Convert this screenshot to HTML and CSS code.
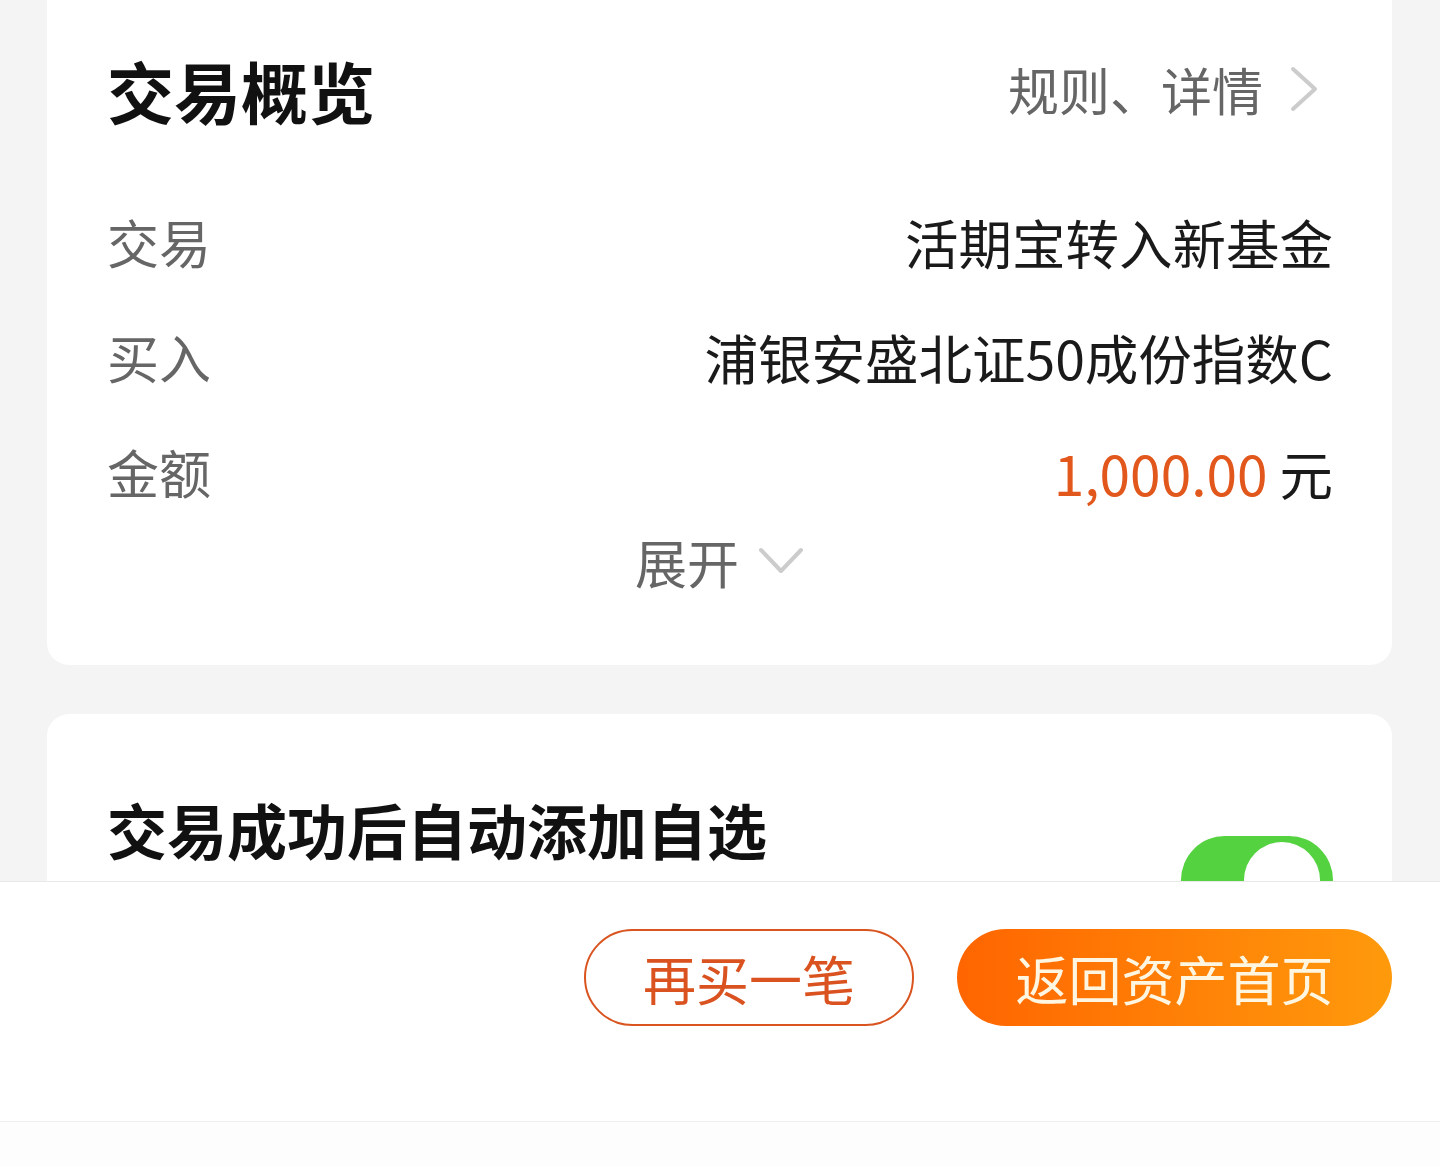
FILE: index.html
```html
<!DOCTYPE html>
<html>
<head>
  <meta charset="utf-8">
  <title>交易概览</title>
  <link rel="stylesheet" href="styles.css">
</head>
<body>
  <div class="content">
    <div class="card overview">
      <div class="card-head">
        <h1>交易概览</h1>
        <a class="more">规则、详情
          <svg width="40" height="48" viewBox="0 0 40 48"><path d="M8 4 L30 24 L8 44" fill="none" stroke="#cccccc" stroke-width="4" stroke-linecap="round" stroke-linejoin="round"/></svg>
        </a>
      </div>
      <div class="row"><span class="label">交易</span><span class="value">活期宝转入新基金</span></div>
      <div class="row"><span class="label">买入</span><span class="value">浦银安盛北证50成份指数C</span></div>
      <div class="row"><span class="label">金额</span><span class="value"><span class="amount">1,000.00</span> 元</span></div>
      <div class="expand">展开
        <svg width="48" height="34" viewBox="0 0 48 34"><path d="M4 6 L24 27 L44 6" fill="none" stroke="#cccccc" stroke-width="4" stroke-linecap="round" stroke-linejoin="round"/></svg>
      </div>
    </div>

    <div class="card auto">
      <h2>交易成功后自动添加自选</h2>
      <div class="switch"><span class="knob"></span></div>
    </div>
  </div>

  <div class="footer">
    <button class="btn btn-line">再买一笔</button>
    <button class="btn btn-fill">返回资产首页</button>
  </div>
  <div class="bottom"></div>
</body>
</html>
```

FILE: styles.css
```css
body {
  margin: 0;
  background: #f4f4f4;
  font-family: "Noto Sans CJK SC", "Noto Sans", sans-serif;
  color: #222;
}
.content {
  height: 881px;
  overflow: hidden;
  padding: 0 48px 0 47px;
}
.card {
  background: #fff;
  border-radius: 22px;
}
.overview {
  border-radius: 0 0 22px 22px;
  padding: 0 59px 72px 60px;
}
.card-head {
  height: 184px;
  display: flex;
  align-items: center;
  justify-content: space-between;
}
.card-head h1 {
  margin: 0;
  font-size: 67px;
  font-weight: bold;
  color: #111;
  position: relative;
  top: -3px;
}
.more {
  display: flex;
  align-items: center;
  gap: 22px;
  font-size: 51px;
  color: #666;
  margin-right: 8px;
  position: relative;
  top: -3px;
}
.row {
  height: 115px;
  display: flex;
  align-items: center;
  justify-content: space-between;
  font-size: 53.5px;
}
.label {
  color: #666;
  font-size: 52px;
}
.value {
  color: #1a1a1a;
}
.amount {
  color: #e2571c;
  font-size: 55px;
}
.expand {
  height: 64px;
  display: flex;
  align-items: center;
  justify-content: center;
  gap: 18px;
  font-size: 52px;
  color: #666;
}
.auto {
  margin-top: 49px;
  height: 400px;
  padding: 0 59px 0 60px;
  display: flex;
  justify-content: space-between;
  align-items: flex-start;
}
.auto h2 {
  margin: 77px 0 0;
  font-size: 60px;
  font-weight: bold;
  color: #111;
  line-height: 76px;
}
.switch {
  margin-top: 122px;
  width: 152px;
  height: 88px;
  border-radius: 44px;
  background: #54d240;
  position: relative;
}
.knob {
  position: absolute;
  right: 13px;
  top: 6px;
  width: 76px;
  height: 76px;
  border-radius: 50%;
  background: #fff;
}
.footer {
  background: #fff;
  border-top: 1px solid #e8e8e8;
  border-bottom: 1px solid #eeeeee;
  height: 192px;
  padding: 47px 48px 0 0;
  display: flex;
  justify-content: flex-end;
  align-items: flex-start;
  gap: 43px;
}
.btn {
  height: 97px;
  border-radius: 49px;
  font-family: "Noto Sans CJK SC", sans-serif;
  font-size: 53px;
  padding: 0;
}
.btn-line {
  width: 330px;
  background: #fff;
  border: 2px solid #d9541f;
  color: #d9521f;
}
.btn-fill {
  width: 435px;
  border: none;
  background: linear-gradient(90deg, #ff6500, #ff9a0c);
  color: #fff6e2;
}
.bottom {
  height: 44px;
  background: #fdfdfd;
}
```
